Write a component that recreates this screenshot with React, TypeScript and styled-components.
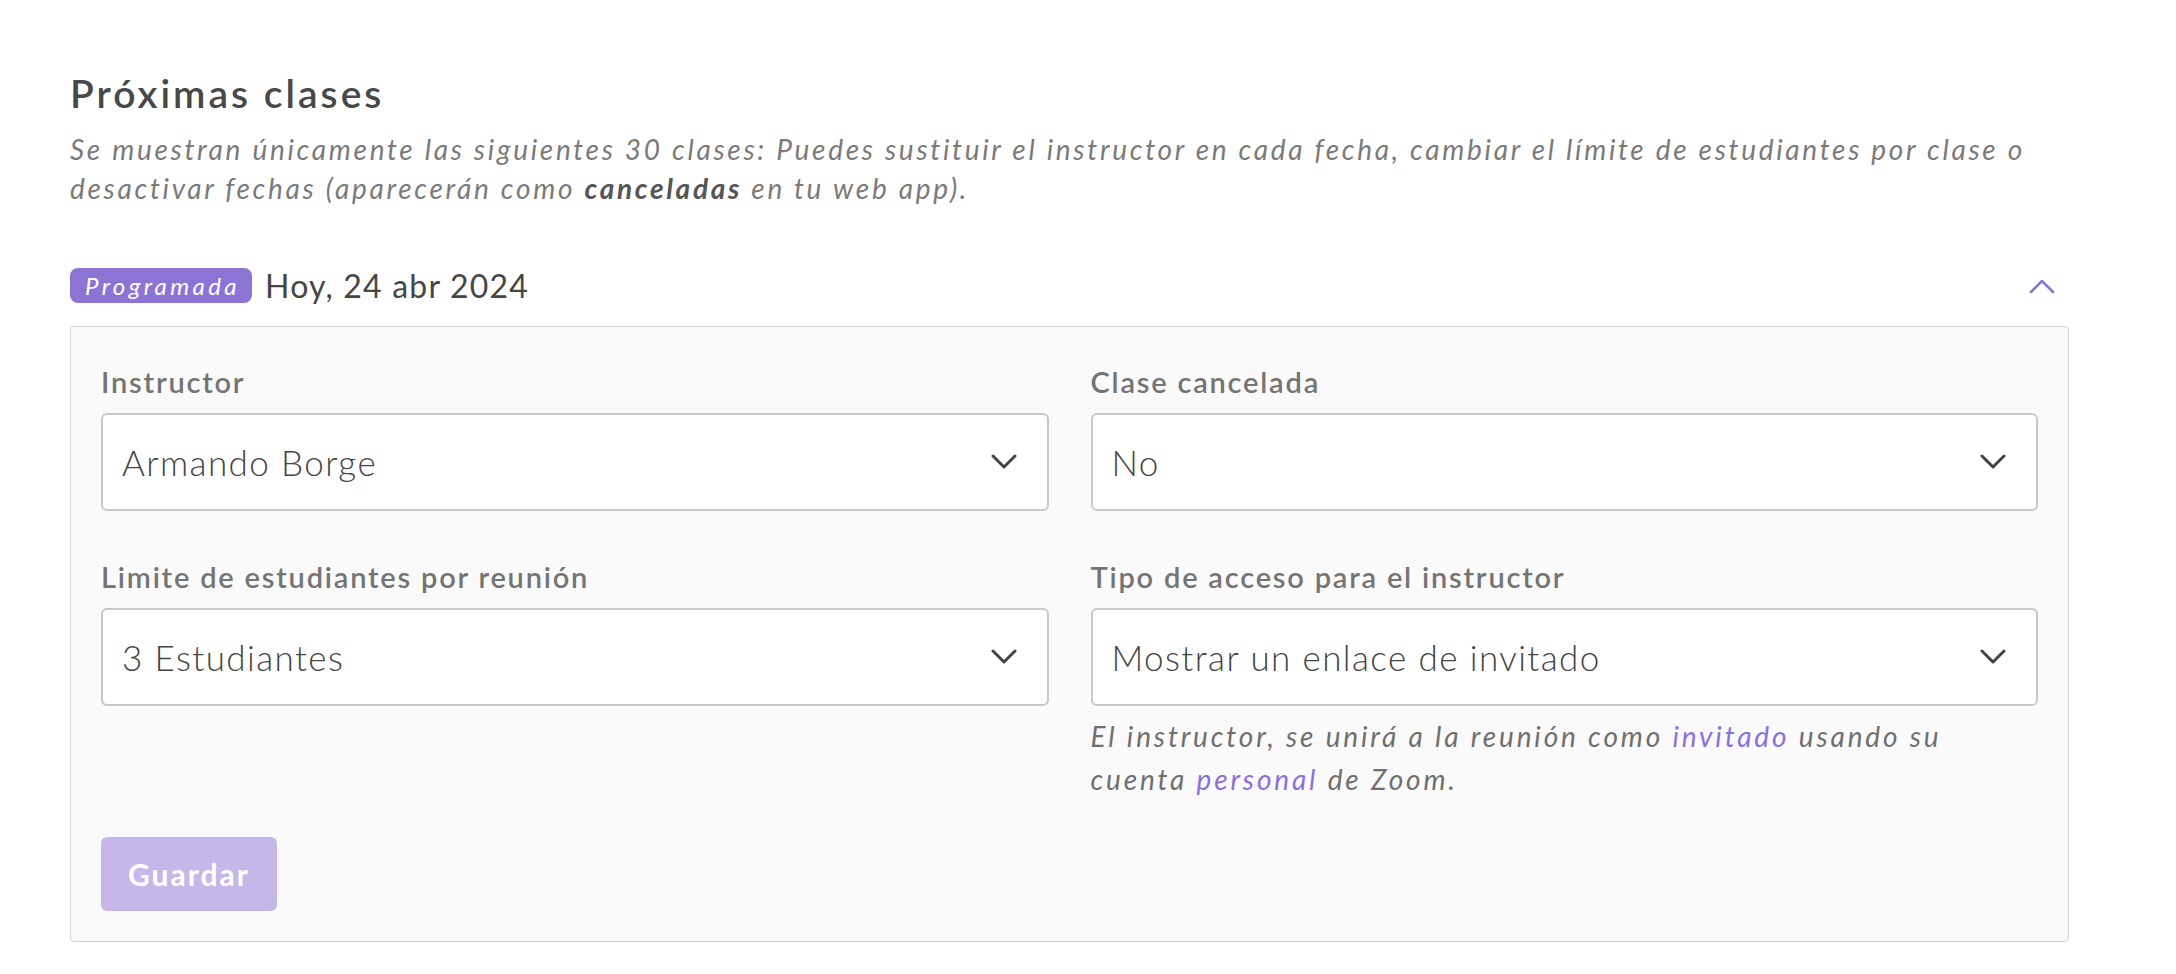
import React from "react";
import styled, { createGlobalStyle } from "styled-components";

const GlobalStyle = createGlobalStyle`
    html, body {
        margin: 0;
        padding: 0;
        background: #ffffff;
    }

    body {
        font-family: Lato, "Noto Sans", "Liberation Sans", sans-serif;
        color: #4a4a4a;
    }

    * {
        box-sizing: border-box;
    }
`;

interface FieldProps {
    label: string
    value: string
    children?: React.ReactNode
}

const ChevronDown = () => (
    <svg width="26" height="16" viewBox="0 0 26 16" fill="none">
        <path d="M2 2L13 13L24 2" stroke="#444444" strokeWidth="3" strokeLinecap="round" strokeLinejoin="round" />
    </svg>
);

const ChevronUp = () => (
    <svg width="26" height="16" viewBox="0 0 26 16" fill="none">
        <path d="M2 14L13 3L24 14" stroke="#8a73d3" strokeWidth="2.5" strokeLinecap="round" strokeLinejoin="round" />
    </svg>
);

const Field: React.FC<FieldProps> = ({ label, value, children }) => (
    <FieldWrap>
        <Label>{label}</Label>
        <Select>
            <Value>{value}</Value>
            <ChevronDown />
        </Select>
        {children}
    </FieldWrap>
);

const App: React.FC = () => {
    return (
        <Page>
            <GlobalStyle />
            <Title>Próximas clases</Title>
            <Subtitle>
                Se muestran únicamente las siguientes 30 clases: Puedes sustituir el instructor en cada fecha, cambiar el límite de estudiantes por clase o desactivar fechas (aparecerán como <strong>canceladas</strong> en tu web app).
            </Subtitle>

            <ClassHeader>
                <Badge>Programada</Badge>
                <DateText>Hoy, 24 abr 2024</DateText>
                <Toggle>
                    <ChevronUp />
                </Toggle>
            </ClassHeader>

            <Panel>
                <FormGrid>
                    <Field label="Instructor" value="Armando Borge" />
                    <Field label="Clase cancelada" value="No" />
                    <Field label="Limite de estudiantes por reunión" value="3 Estudiantes" />
                    <Field label="Tipo de acceso para el instructor" value="Mostrar un enlace de invitado">
                        <Hint>
                            El instructor, se unirá a la reunión como <Link>invitado</Link> usando su cuenta <Link>personal</Link> de Zoom.
                        </Hint>
                    </Field>
                </FormGrid>
                <SaveButton disabled>Guardar</SaveButton>
            </Panel>
        </Page>
    );
}

const Page = styled.main`
    padding: 69px 107px 40px 70px;
`;

const Title = styled.h2`
    margin: 0;
    font-size: 39px;
    line-height: 48px;
    font-weight: 600;
    letter-spacing: 3px;
    color: #484848;
`;

const Subtitle = styled.p`
    margin: 13px 0 0;
    font-size: 28px;
    line-height: 39px;
    font-style: italic;
    font-weight: 400;
    letter-spacing: 2.7px;
    color: #7a7a7a;

    strong {
        font-weight: 700;
        color: #555555;
    }
`;

const ClassHeader = styled.div`
    display: flex;
    align-items: center;
    height: 35px;
    margin-top: 60px;
    padding-right: 14px;
`;

const Badge = styled.span`
    display: inline-flex;
    align-items: center;
    height: 35px;
    padding: 0 12px 0 15px;
    border-radius: 8px;
    background: #8c74d4;
    color: #ffffff;
    font-size: 24px;
    font-style: italic;
    letter-spacing: 3.4px;
`;

const DateText = styled.span`
    margin-left: 13px;
    font-size: 32px;
    letter-spacing: 1.2px;
    color: #464646;
`;

const Toggle = styled.button`
    display: flex;
    margin-left: auto;
    padding: 0;
    border: none;
    background: none;
    cursor: pointer;
`;

const Panel = styled.section`
    margin-top: 23px;
    padding: 38px 30px 30px;
    border: 1px solid #d3d3d3;
    border-radius: 4px;
    background: #fafafa;
`;

const FormGrid = styled.div`
    display: grid;
    grid-template-columns: 1fr 1fr;
    column-gap: 42px;
    row-gap: 49px;
`;

const FieldWrap = styled.div`
    display: flex;
    flex-direction: column;
`;

const Label = styled.label`
    font-size: 29px;
    line-height: 34px;
    font-weight: 600;
    letter-spacing: 1.8px;
    color: #747474;
`;

const Select = styled.div`
    display: flex;
    align-items: center;
    justify-content: space-between;
    height: 98px;
    margin-top: 14px;
    padding: 0 30px 0 19px;
    border: 2px solid #c8c8c8;
    border-radius: 6px;
    background: #ffffff;
    cursor: pointer;
`;

const Value = styled.span`
    font-size: 35px;
    font-weight: 300;
    letter-spacing: 1.4px;
    color: #444444;
`;

const Hint = styled.p`
    max-width: 900px;
    margin: 9px 0 0;
    font-size: 28px;
    line-height: 43px;
    font-style: italic;
    letter-spacing: 2.85px;
    color: #6f6f6f;
`;

const Link = styled.a`
    color: #8b6fe0;
    cursor: pointer;
`;

const SaveButton = styled.button`
    display: block;
    height: 74px;
    margin-top: 36px;
    padding: 0 27px;
    border: none;
    border-radius: 6px;
    background: #c5b8e8;
    color: #ffffff;
    font-family: inherit;
    font-size: 30px;
    font-weight: 700;
    letter-spacing: 2px;
`;

export default App;
